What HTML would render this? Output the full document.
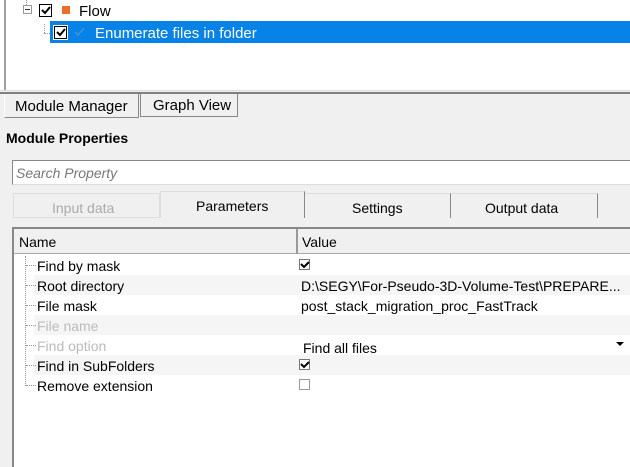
<!DOCTYPE html>
<html><head><style>
*{margin:0;padding:0;box-sizing:border-box}
body{width:630px;height:460px;overflow:hidden;background:#f0f0f0;font-family:"Liberation Sans",sans-serif;font-size:14px;color:#000;position:relative}
.a{position:absolute;white-space:nowrap}
.cb{position:absolute;width:13px;height:13px;border:1px solid #333;background:#fff}
.cb svg{position:absolute;left:0;top:0}
.row{position:absolute;left:34px;width:596px;height:20px}
.g{background:#f5f5f5}
.t{position:absolute;left:37px;font-size:14px}
.v{position:absolute;left:301px}
.dot{position:absolute;border-top:1px dotted #999;width:10px}
</style></head><body>
<div class="a" style="left:0;top:0;width:630px;height:91px;background:#fff"></div>
<div class="a" style="left:4px;top:0;width:2px;height:91px;background:#a0a0a0"></div>
<div class="a" style="left:0;top:90px;width:630px;height:1px;background:#ddd"></div>
<div class="a" style="left:0;top:92px;width:630px;height:2px;background:#808080"></div>
<div class="a" style="left:26px;top:0;height:5px;border-left:1px dotted #999"></div>
<div class="a" style="left:23px;top:5px;width:9px;height:9px;border:1px solid #999;background:#fff"><div style="position:absolute;left:1px;top:3px;width:5px;height:1px;background:#333"></div></div>
<div class="a" style="left:44px;top:24px;height:9px;border-left:1px dotted #999"></div>
<div class="a" style="left:44px;top:33px;width:10px;border-top:1px dotted #999"></div>
<div class="cb" style="left:39px;top:4px;border-color:#000"><svg width="11" height="11"><path d="M2 5l3 3 5-6" stroke="#000" stroke-width="2" fill="none"/></svg></div>
<div class="a" style="left:62px;top:6px;width:8px;height:8px;background:#e8702a"></div>
<div class="a" style="left:79px;top:3px;font-size:15px">Flow</div>
<div class="a" style="left:50px;top:21px;width:580px;height:22px;background:#0782e6"></div>
<div class="cb" style="left:54px;top:26px;border-color:#000;outline:1px solid #fff"><svg width="11" height="11"><path d="M2 5l3 3 5-6" stroke="#000" stroke-width="2" fill="none"/></svg></div>
<svg class="a" style="left:74px;top:27px" width="12" height="10"><path d="M1 5l3 3 6-7" stroke="#3a8fd6" stroke-width="2" fill="none"/></svg>
<div class="a" style="left:95px;top:25px;color:#fff;font-size:15px">Enumerate files in folder</div>
<div class="a" style="left:4px;top:94px;width:135px;height:24px;background:#f0f0f0;border-right:1px solid #888;border-bottom:1px solid #888;border-left:1px solid #fff"></div>
<div class="a" style="left:15px;top:98px;font-size:15px">Module Manager</div>
<div class="a" style="left:140px;top:94px;width:98px;height:23px;border:1px solid #888;border-top:none;background:#f0f0f0"></div>
<div class="a" style="left:153px;top:97px;font-size:15px">Graph View</div>
<div class="a" style="left:6px;top:130px;font-weight:bold;font-size:14px">Module Properties</div>
<div class="a" style="left:12px;top:160px;width:620px;height:25px;background:#fff;border:1px solid #888;border-right:none;border-bottom-color:#ddd"></div>
<div class="a" style="left:16px;top:165px;font-style:italic;color:#777">Search Property</div>
<div class="a" style="left:13px;top:193px;width:147px;height:25px;background:#f0f0f0;border:1px solid #ddd"></div>
<div class="a" style="left:52px;top:200px;color:#aaa">Input data</div>
<div class="a" style="left:160px;top:191px;width:145px;height:27px;background:#f0f0f0;border-top:1px solid #ddd;border-left:1px solid #ddd;border-right:1px solid #888"></div>
<div class="a" style="left:196px;top:198px">Parameters</div>
<div class="a" style="left:305px;top:193px;width:146px;height:25px;border-right:1px solid #888;border-top:1px solid #ddd"></div>
<div class="a" style="left:352px;top:200px">Settings</div>
<div class="a" style="left:451px;top:193px;width:147px;height:25px;border-right:1px solid #888;border-top:1px solid #ddd"></div>
<div class="a" style="left:485px;top:200px">Output data</div>
<div class="a" style="left:12px;top:227px;width:620px;height:240px;background:#fff;border-left:2px solid #888;border-top:2px solid #888"></div>
<div class="a" style="left:14px;top:229px;width:616px;height:25px;background:#f0f0f0;border-bottom:1px solid #aaa"></div>
<div class="a" style="left:296px;top:229px;width:2px;height:25px;background:#999"></div>
<div class="a" style="left:19px;top:234px">Name</div>
<div class="a" style="left:302px;top:234px">Value</div>
<div class="a" style="left:25px;top:256px;height:130px;border-left:1px dotted #999"></div>
<div class="row g" style="top:275px"></div>
<div class="row g" style="top:315px"></div>
<div class="row g" style="top:355px"></div>
<div class="dot" style="left:26px;top:265px"></div><div class="dot" style="left:26px;top:285px"></div><div class="dot" style="left:26px;top:305px"></div><div class="dot" style="left:26px;top:325px"></div><div class="dot" style="left:26px;top:345px"></div><div class="dot" style="left:26px;top:365px"></div><div class="dot" style="left:26px;top:385px"></div>
<div class="a t" style="top:258px">Find by mask</div>
<div class="a t" style="top:278px">Root directory</div>
<div class="a t" style="top:298px">File mask</div>
<div class="a t" style="top:318px;color:#bbb">File name</div>
<div class="a t" style="top:338px;color:#bbb">Find option</div>
<div class="a t" style="top:358px">Find in SubFolders</div>
<div class="a t" style="top:378px">Remove extension</div>
<div class="cb" style="left:299px;top:259px;width:11px;height:11px;border-color:#777"><svg width="10" height="10"><path d="M1 4l3 3 5-5" stroke="#000" stroke-width="2" fill="none"/></svg></div>
<div class="a v" style="top:278px">D:\SEGY\For-Pseudo-3D-Volume-Test\PREPARE...</div>
<div class="a v" style="top:298px">post_stack_migration_proc_FastTrack</div>
<div class="a" style="left:303px;top:340px">Find all files</div>
<svg class="a" style="left:616px;top:342px" width="8" height="5"><path d="M0 0h8L4 4z" fill="#000"/></svg>
<div class="cb" style="left:299px;top:359px;width:11px;height:11px;border-color:#777"><svg width="10" height="10"><path d="M1 4l3 3 5-5" stroke="#000" stroke-width="2" fill="none"/></svg></div>
<div class="cb" style="left:299px;top:379px;width:11px;height:11px;border-color:#999"></div>
</body></html>
